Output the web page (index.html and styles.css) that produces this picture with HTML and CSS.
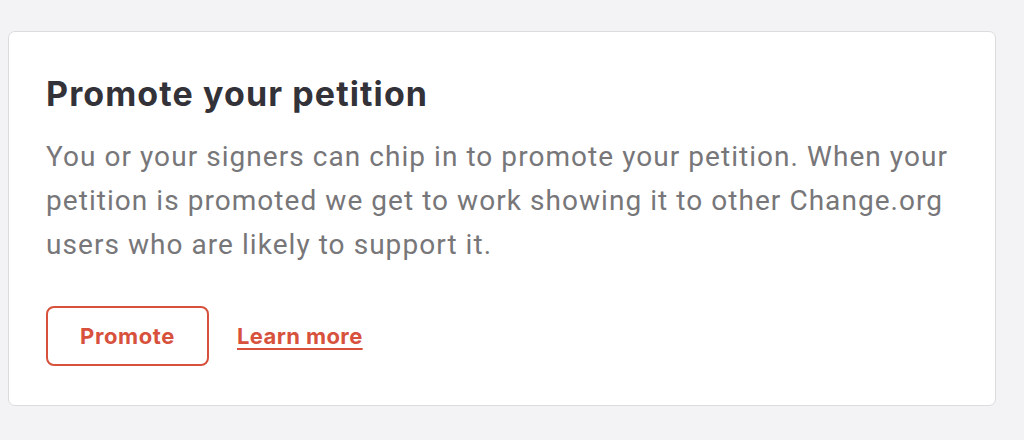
FILE: index.html
```html
<!DOCTYPE html>
<html>
<head>
<meta charset="utf-8">
<link rel="stylesheet" href="styles.css">
</head>
<body>
<div class="page">
  <section class="card">
    <h2 class="title">Promote your petition</h2>
    <p class="desc">You or your signers can chip in to promote your petition. When your petition is promoted we get to work showing it to other Change.org users who are likely to support it.</p>
    <div class="actions">
      <button class="btn">Promote</button>
      <a class="link" href="#">Learn more</a>
    </div>
  </section>
</div>
</body>
</html>
```

FILE: styles.css
```css
html, body {
  margin: 0;
  padding: 0;
  background: #f3f2f5;
}
.page {
  padding: 31px 28px 34px 8px;
}
.card {
  background: #ffffff;
  border: 1px solid #dcdbde;
  border-radius: 7px;
  padding: 40px 38px 38px 37px;
  box-sizing: border-box;
  height: 375px;
}
.title {
  margin: 0;
  font-family: Inter, "Liberation Sans", sans-serif;
  font-weight: 700;
  font-size: 34px;
  line-height: 44px;
  color: #333238;
  letter-spacing: 1.1px;
}
.desc {
  margin: 19px 0 0 0;
  max-width: 912px;
  font-family: Roboto, "Liberation Sans", sans-serif;
  font-size: 28px;
  line-height: 44px;
  letter-spacing: 1.05px;
  color: #777679;
}
.actions {
  display: flex;
  align-items: center;
  gap: 28px;
  margin-top: 39px;
}
.btn {
  width: 163px;
  height: 60px;
  border: 2px solid #d7513c;
  border-radius: 8px;
  background: #fff;
  color: #d7513c;
  font-family: Inter, "Liberation Sans", sans-serif;
  font-weight: 700;
  font-size: 22px;
  letter-spacing: 0.6px;
}
.link {
  color: #d7513c;
  font-family: Inter, "Liberation Sans", sans-serif;
  font-weight: 700;
  font-size: 22px;
  letter-spacing: 0.4px;
  text-decoration: underline;
  text-underline-offset: 4px;
  text-decoration-thickness: 2px;
}
```
